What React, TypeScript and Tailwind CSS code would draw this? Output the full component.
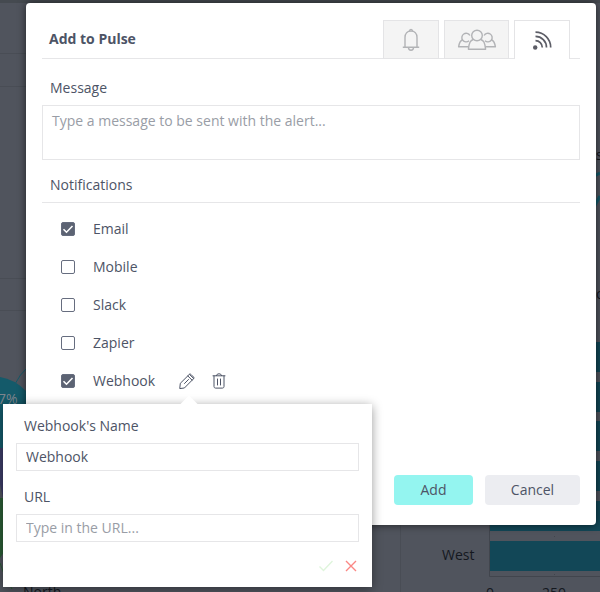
import { useState } from "react";

const channels = ["Email", "Mobile", "Slack", "Zapier", "Webhook"];

const bars = [342, 382, 421, 461, 501, 541];

const BellIcon = () => (
  <svg width="20" height="24" viewBox="0 0 20 24" fill="none" stroke="currentColor" strokeWidth="1.400" strokeLinejoin="round">
    <path d="M4 19V9.500C4 5.500 6.500 3 10 3s6 2.500 6 6.500V19" />
    <path d="M8.500 3.200C8.500 .8 11.500 .8 11.500 3.200M1.800 19.200h16.400M7.500 19.500c0 3.600 5 3.600 5 0" />
  </svg>
);

const UsersIcon = () => (
  <svg width="40" height="24" viewBox="0 0 40 24" fill="none" stroke="currentColor" strokeWidth="1.400" strokeLinejoin="round">
    <circle cx="20" cy="7.500" r="5.300" />
    <path d="M16.200 11.500c-3 1.200-4 3-4.800 9.700h17.200c-.8-6.700-1.800-8.500-4.800-9.700" />
    <path d="M12 12.800A4.300 4.300 0 1 1 12.900 7.500" />
    <path d="M5.200 12c-2.600 1.200-3 3-3.600 6.800h10" />
    <path d="M28 12.800A4.300 4.300 0 1 0 27.100 7.500" />
    <path d="M34.800 12c2.600 1.200 3 3 3.600 6.800h-10" />
  </svg>
);

const FeedIcon = () => (
  <svg width="20" height="20" viewBox="0 0 20 20" fill="none" stroke="currentColor" strokeWidth="1.700">
    <circle cx="3.200" cy="17.500" r="2.200" fill="currentColor" stroke="none" />
    <path d="M3.500 10.600a6.800 6.800 0 0 1 6.800 6.800M3.500 6.400A11 11 0 0 1 14.500 17.400M3.500 2.200A15.200 15.200 0 0 1 18.700 17.400" />
  </svg>
);

const PencilIcon = () => (
  <svg width="16" height="16" viewBox="0 0 16 16" fill="none" stroke="currentColor" strokeWidth="1" strokeLinejoin="round" strokeLinecap="round">
    <path d="M.8 15.200l.5-4.900L10.300 1.400c.5-.5 1.100-.5 1.600 0l2.700 2.700c.5.500.5 1.100 0 1.600L5.700 14.700z" />
    <path d="M8.900 3l4.200 4.200M10.600 1.500l4 4M5.500 10.500l4-4" />
  </svg>
);

const TrashIcon = () => (
  <svg width="14" height="16" viewBox="0 0 14 16" fill="none" stroke="currentColor" strokeWidth="1" strokeLinecap="round" strokeLinejoin="round">
    <path d="M1 2.800h12M2 3v10.500c0 .9.600 1.600 1.600 1.600h6.800c1 0 1.600-.7 1.600-1.600V3M4.300 2.600c0-2.500 5.400-2.500 5.400 0M5.500 6v6M8.500 6v6" />
  </svg>
);

// Dimmed dashboard that stays visible around the dialog
const Dashboard = () => (
  <svg aria-hidden="true" className="absolute inset-0 h-full w-full bg-[#50545d] font-['Open_Sans',sans-serif]">
    <rect width="100%" height="3" fill="#454a50" />
    <g stroke="#494d55">
      <path d="M0 53.500h26M0 86.500h26M0 278.500h26M0 310.500h26M400.500 525v67" />
    </g>
    <path d="M0 377q14 2 26 14v57H0z" fill="#145a6a" />
    <path d="M15 384q5-10 12-16" fill="none" stroke="#145a6a" />
    <path d="M0 448l3 0v50L0 484z" fill="#3c3c66" />
    <path d="M0 498h4v54l-4 6z" fill="#2a5c35" />
    <path d="M0 563q4 14 12 26" fill="none" stroke="#2a5c35" />
    <text x="-2" y="404" fontSize="14" fill="#7d858e">7%</text>
    <text x="23" y="597" fontSize="14" fill="#14181f">North</text>
    <g fill="#14181f" fontSize="14">
      <text x="596" y="160">s</text>
      <text x="596" y="299">o</text>
      <text x="442" y="560">West</text>
      <text x="486" y="598">0</text>
      <text x="542" y="598">250</text>
    </g>
    <path d="M594 176l6-3M594 207l6-11" stroke="#145a6a" strokeWidth="3" />
    {bars.map((y) => (
      <rect key={y} x="490" y={y} width="100%" height="30" fill="#124757" />
    ))}
    <path d="M489.500 340v236.500H600M554.500 536v1M554.500 574v1" fill="none" stroke="#41454d" />
  </svg>
);

const WebhookPopover = () => {
  const [name, setName] = useState("Webhook");

  return (
    <div className="w-[369px] bg-white px-[13px] pt-3 pb-[14px] shadow-[0_2px_10px_rgba(0,0,0,0.4)]">
      <div className="absolute -top-[6px] left-[180px] h-3 w-3 rotate-45 bg-white"></div>
      <label htmlFor="webhook-name" className="relative block px-2 pb-[7px] leading-5">Webhook's Name</label>
      <input
        id="webhook-name"
        value={name}
        onChange={(e) => setName(e.target.value)}
        className="block h-7 w-full border border-[#e6e6e8] px-[9px] pb-[2px] outline-none"
      />
      <label htmlFor="webhook-url" className="block px-2 pt-4 pb-[7px] leading-5">URL</label>
      <input
        id="webhook-url"
        placeholder="Type in the URL..."
        className="block h-7 w-full border border-[#e6e6e8] px-[9px] pb-[2px] outline-none placeholder:text-[#999da6]"
      />
      <div className="mt-[17px] flex justify-end gap-3 pr-[2px]">
        <button aria-label="Save webhook" className="text-[#dff5dc]">
          <svg width="14" height="14" viewBox="0 0 14 14" fill="none" stroke="currentColor" strokeWidth="1.400">
            <path d="M.5 7.500l4 4L13.500 2" />
          </svg>
        </button>
        <button aria-label="Discard webhook" className="text-[#fb8784]">
          <svg width="12" height="14" viewBox="0 0 12 14" fill="none" stroke="currentColor" strokeWidth="1.400">
            <path d="M1 2l10 10M11 2L1 12" />
          </svg>
        </button>
      </div>
    </div>
  );
};

const App = () => {
  const [selected, setSelected] = useState(["Email", "Webhook"]);

  const toggle = (channel: string) => {
    setSelected((prev) =>
      prev.includes(channel) ? prev.filter((c) => c !== channel) : [...prev, channel]
    );
  };

  return (
    <div className="relative min-h-screen overflow-hidden pt-[3px] pr-1 pl-[26px] font-['Open_Sans',sans-serif] text-sm text-[#4d5466]">
      <Dashboard />

      <div role="dialog" aria-labelledby="dialog-title" className="relative rounded bg-white px-4 pb-5 shadow-[0_0_8px_rgba(0,0,0,0.6)]">
        <header className="flex items-end justify-between border-b border-[#e6e6e8] pt-[17px] pr-[10px] pl-[7px]">
          <h1 id="dialog-title" className="self-center font-bold">Add to Pulse</h1>
          <div role="tablist" className="-mb-px flex gap-[5px]">
            <button role="tab" aria-selected="false" aria-label="Alert" className="flex h-[39px] w-14 items-center justify-center border border-[#e4e4e6] bg-[#f4f4f4] text-[#b2b3b6]">
              <BellIcon />
            </button>
            <button role="tab" aria-selected="false" aria-label="Recipients" className="flex h-[39px] w-[65px] items-center justify-center border border-[#e4e4e6] bg-[#f4f4f4] text-[#b2b3b6]">
              <UsersIcon />
            </button>
            <button role="tab" aria-selected="true" aria-label="Notifications" className="flex h-[39px] w-14 items-center justify-center border border-b-0 border-[#e4e4e6] bg-white text-[#5c5d66]">
              <FeedIcon />
            </button>
          </div>
        </header>

        <label htmlFor="message" className="block px-2 pt-[19px] pb-[7px] leading-5">Message</label>
        <textarea
          id="message"
          placeholder="Type a message to be sent with the alert..."
          className="block h-[55px] w-full resize-none border border-[#e6e6e8] px-[9px] py-[5px] leading-5 outline-none placeholder:text-[#999da6]"
        />

        <h2 className="border-b border-[#e6e6e8] px-2 pt-[15px] pb-[7px] leading-5">Notifications</h2>
        <ul className="pt-[7px]">
          {channels.map((channel) => (
            <li key={channel} className="flex h-[38px] items-center pl-[19px]">
              <label className="flex items-center gap-[18px]">
                <span className="relative">
                  <input
                    type="checkbox"
                    checked={selected.includes(channel)}
                    onChange={() => toggle(channel)}
                    className="peer block h-[14px] w-[14px] appearance-none rounded-xs border border-[#666d7f] checked:bg-[#5c6373]"
                  />
                  <svg viewBox="0 0 14 14" fill="none" stroke="#fff" strokeWidth="1.600" className="pointer-events-none absolute inset-0 hidden h-[14px] w-[14px] peer-checked:block">
                    <path d="M2.500 7.200l3 3L11.500 4" />
                  </svg>
                </span>
                {channel}
              </label>
              {channel === "Webhook" && (
                <div className="ml-6 flex items-center gap-[17px]">
                  <button aria-label="Edit webhook">
                    <PencilIcon />
                  </button>
                  <button aria-label="Delete webhook">
                    <TrashIcon />
                  </button>
                </div>
              )}
            </li>
          ))}
        </ul>

        {/* Popover hangs right below the last row */}
        <div className="relative">
          <div className="absolute top-1 -left-[39px]">
            <WebhookPopover />
          </div>
        </div>

        <footer className="mt-[75px] flex justify-end gap-3">
          <button className="h-[30px] w-[79px] rounded bg-[#94f5f0]">Add</button>
          <button className="h-[30px] w-[95px] rounded bg-[#ecedf1]">Cancel</button>
        </footer>
      </div>
    </div>
  );
};

export default App;
